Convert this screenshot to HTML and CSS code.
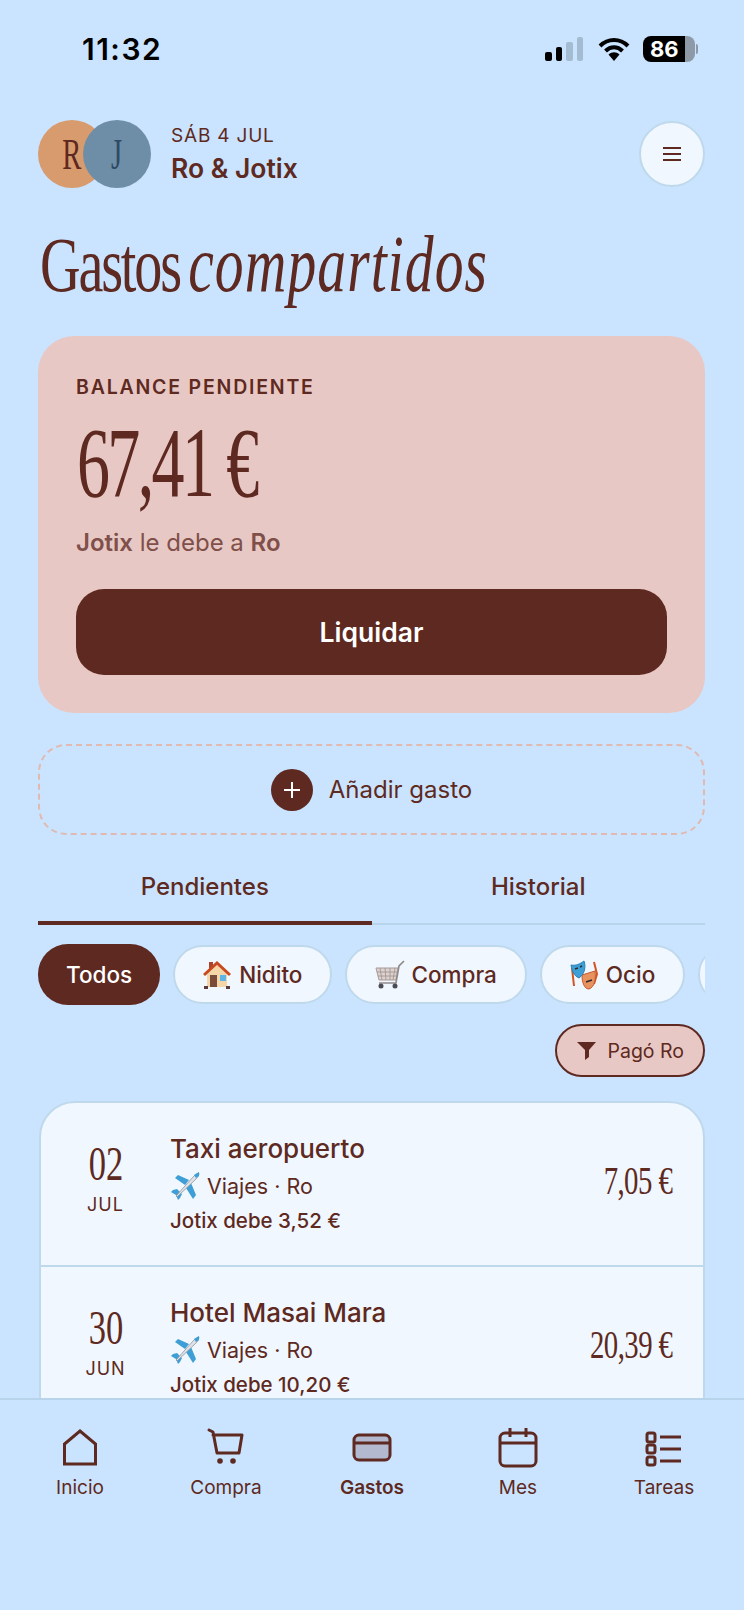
FILE: index.html
```html
<!DOCTYPE html>
<html lang="es">
<head>
	<meta charset="UTF-8">
	<title>Gastos compartidos</title>
	<link rel="stylesheet" href="styles.css">
</head>
<body>
	<svg class="defs" width="0" height="0">
		<symbol id="plane" viewBox="0 0 30 30">
			<path d="M5 7 8 4 19 9 15 14Z" fill="#3d9fd6"/>
			<path d="M7 18 3 19 1 21 6 24 8 29 10 27 12 23Z" fill="#3d9fd6"/>
			<path d="M16 17 21 12 26 24 23 28Z" fill="#3d9fd6"/>
			<path d="M6 25 24 5C26 3 28 2 29 2 29 4 28 6 26 8L7 26Z" fill="#dfe3e8" stroke="#8d949c" stroke-width=".8"/>
			<path d="M24 4 29 1 29 5 26 7Z" fill="#3d9fd6"/>
		</symbol>
	</svg>
	<div class="app">
		<div class="status">
			<span class="time">11:32</span>
			<div class="status-icons">
				<div class="signal">
					<i class="bar b1"></i>
					<i class="bar b2"></i>
					<i class="bar b3 off"></i>
					<i class="bar b4 off"></i>
				</div>
				<svg class="wifi" width="32" height="24" viewBox="0 0 32 24">
					<path d="M2 9C10 1 22 1 30 9" fill="none" stroke="#000" stroke-width="4"/>
					<path d="M7.500 14C12.500 9 19.500 9 24.500 14" fill="none" stroke="#000" stroke-width="4"/>
					<path d="M10.500 17.500C14 14.500 18 14.500 21.500 17.500L16 24Z" fill="#000"/>
				</svg>
				<div class="battery"><span>86</span><i class="nub"></i></div>
			</div>
		</div>

		<div class="main">
			<div class="head">
				<div class="avatars">
					<div class="avatar ro"><span class="narrow mid">R</span></div>
					<div class="avatar jo"><span class="narrow mid">J</span></div>
				</div>
				<div class="who">
					<div class="date">SÁB 4 JUL</div>
					<div class="names">Ro &amp; Jotix</div>
				</div>
				<div class="menu">
					<svg width="18" height="14" viewBox="0 0 18 14"><path d="M0 1H18M0 7H18M0 13H18" stroke="#5e2920" stroke-width="2"/></svg>
				</div>
			</div>

			<h1 class="title"><span class="narrow">Gastos <em>compartidos</em></span></h1>

			<div class="balance">
				<div class="label">BALANCE PENDIENTE</div>
				<div class="total"><span class="narrow">67,41 €</span></div>
				<div class="sub"><b>Jotix</b> le debe a <b>Ro</b></div>
				<div class="settle">Liquidar</div>
			</div>

			<div class="add">
				<span class="plus">
					<svg width="18" height="18" viewBox="0 0 18 18"><path d="M9 1V17M1 9H17" stroke="#fff" stroke-width="2"/></svg>
				</span>
				<span>Añadir gasto</span>
			</div>

			<div class="tabs">
				<div class="tab on">Pendientes</div>
				<div class="tab">Historial</div>
			</div>

			<div class="chips">
				<div class="chip dark">Todos</div>
				<div class="chip">
					<svg width="28" height="30" viewBox="0 0 28 30">
						<path d="M6 2H10V9H6Z" fill="#a8452c"/>
						<path d="M4 13 14 4 24 13V27H4Z" fill="#f5d6a8"/>
						<path d="M1 15 14 3 27 15" fill="none" stroke="#c8491f" stroke-width="3"/>
						<path d="M7 15H14V27H7Z" fill="#7a4a3a"/>
						<path d="M17 15H23V21H17Z" fill="#5fb4e6"/>
						<path d="M1 26H5V29H1ZM23 26H27V29H23Z" fill="#5a3a3a"/>
					</svg>
					Nidito
				</div>
				<div class="chip tight">
					<svg width="30" height="30" viewBox="0 0 30 30">
						<path d="M1 8H23L21 20H4Z" fill="#dcd2d0" stroke="#a89a98" stroke-width="1"/>
						<path d="M5 8 7 20M10 8 11 20M15 8 15 20M20 8 18 20M2 12H22M3 16H21" stroke="#a08f8d" stroke-width=".8"/>
						<path d="M29 1 24 6 21 23H4" fill="none" stroke="#8f8a8a" stroke-width="1.600"/>
						<circle cx="6" cy="26" r="2.500" fill="#4c4a55"/>
						<circle cx="20" cy="26" r="2.500" fill="#4c4a55"/>
					</svg>
					Compra
				</div>
				<div class="chip">
					<svg width="28" height="30" viewBox="0 0 28 30">
						<path d="M2 8 4 26M24 2 27 14 24 24" fill="none" stroke="#d4521f" stroke-width="2"/>
						<path d="M12 15 25 11C26 18 25 27 19 29 14 29 12 22 12 15Z" fill="#e8935f" stroke="#c7582a"/>
						<path d="M1 5C6 6 10 4 14 1 16 6 15 14 9 18 4 16 2 11 1 5Z" fill="#3d9fd6" stroke="#2b7fb5"/>
						<path d="M5 9 8 8M10 7 12 6M16 22 22 20" stroke="#33292b" stroke-width="1.500"/>
					</svg>
					Ocio
				</div>
				<div class="chip blank"></div>
			</div>

			<div class="filter-row">
				<div class="filter">
					<svg width="19" height="18" viewBox="0 0 19 18"><path d="M0 0H19L12 8V15L8 18V8Z" fill="#5e2920"/></svg>
					Pagó Ro
				</div>
			</div>

			<div class="list">
				<div class="row">
					<div class="day">
						<div class="num"><span class="narrow mid">02</span></div>
						<div class="mon">JUL</div>
					</div>
					<div class="info">
						<div class="name">Taxi aeropuerto</div>
						<div class="meta"><svg width="30" height="30"><use href="#plane"/></svg>Viajes · Ro</div>
						<div class="owes">Jotix debe 3,52 €</div>
					</div>
					<div class="amount"><span class="narrow end">7,05 €</span></div>
				</div>
				<div class="row">
					<div class="day">
						<div class="num"><span class="narrow mid">30</span></div>
						<div class="mon">JUN</div>
					</div>
					<div class="info">
						<div class="name">Hotel Masai Mara</div>
						<div class="meta"><svg width="30" height="30"><use href="#plane"/></svg>Viajes · Ro</div>
						<div class="owes">Jotix debe 10,20 €</div>
					</div>
					<div class="amount"><span class="narrow end">20,39 €</span></div>
				</div>
			</div>
		</div>

		<div class="nav">
			<div class="nav-item">
				<svg width="44" height="44" viewBox="0 0 44 44"><path d="M6.500 38V18L22 5 37.500 18V38Z" fill="none" stroke="#5e2920" stroke-width="3"/></svg>
				Inicio
			</div>
			<div class="nav-item">
				<svg width="44" height="44" viewBox="0 0 44 44"><path d="M5 4 9 6 13 27H35L38 9H9" fill="none" stroke="#5e2920" stroke-width="3" stroke-linejoin="round" stroke-linecap="round"/><circle cx="16" cy="35" r="2.800" fill="#5e2920"/><circle cx="29" cy="35" r="2.800" fill="#5e2920"/></svg>
				Compra
			</div>
			<div class="nav-item active">
				<svg width="44" height="44" viewBox="0 0 44 44"><rect x="4" y="9" width="36" height="25" rx="5" fill="#b3bad0" stroke="#5e2920" stroke-width="3"/><path d="M4 17H40" stroke="#5e2920" stroke-width="3"/></svg>
				Gastos
			</div>
			<div class="nav-item">
				<svg width="44" height="44" viewBox="0 0 44 44"><rect x="4" y="7" width="36" height="33" rx="5" fill="none" stroke="#5e2920" stroke-width="3"/><path d="M4 17H40M14 2V11M30 2V11" stroke="#5e2920" stroke-width="3"/></svg>
				Mes
			</div>
			<div class="nav-item">
				<svg width="44" height="44" viewBox="0 0 44 44"><rect x="5" y="7" width="8" height="9" rx="2" fill="none" stroke="#5e2920" stroke-width="3"/><rect x="5" y="19" width="8" height="8" rx="2" fill="none" stroke="#5e2920" stroke-width="3"/><rect x="5" y="31" width="8" height="8" rx="2" fill="none" stroke="#5e2920" stroke-width="3"/><path d="M18 11H39M18 23H39M18 35H39" stroke="#5e2920" stroke-width="3"/></svg>
				Tareas
			</div>
		</div>
	</div>
</body>
</html>
```

FILE: styles.css
```css
html *{
	padding:0;
	margin:0;
	box-sizing:border-box;
}
body{
	background-color:#cae4ff;
	color:#5e2920;
	font-family:"Inter","Liberation Sans",sans-serif;
}
.defs{
	position:absolute;
}
.app{
	width:744px;
	height:1610px;
	display:flex;
	flex-direction:column;
	overflow:hidden;
}
.narrow{
	display:inline-block;
	font-family:"Liberation Serif",serif;
	font-weight:400;
	white-space:nowrap;
	transform:scaleX(.72);
	transform-origin:left center;
}
.narrow.mid{
	transform-origin:center;
}
.narrow.end{
	transform-origin:right center;
}

/* status bar */
.status{
	height:98px;
	flex:none;
	display:flex;
	align-items:center;
	justify-content:space-between;
	padding:0 49px 0 82px;
	color:#000;
}
.time{
	font-size:30px;
	font-weight:600;
	line-height:36px;
	letter-spacing:1.500px;
}
.status-icons{
	display:flex;
	align-items:center;
}
.signal{
	display:flex;
	align-items:flex-end;
	gap:4px;
	height:24px;
	margin-right:15px;
}
.bar{
	display:block;
	width:6.500px;
	background-color:#000;
	border-radius:2px;
}
.bar.off{
	background-color:#a3bcd2;
}
.b1{height:9px;}
.b2{height:14px;}
.b3{height:19px;}
.b4{height:24px;}
.wifi{
	margin-right:13px;
}
.battery{
	position:relative;
	width:52px;
	height:26px;
	border-radius:8px;
	background:linear-gradient(90deg,#000 80%,#8d99a6 80%);
	color:#fff;
	font-size:22px;
	font-weight:700;
	line-height:26px;
	padding-left:7px;
}
.nub{
	position:absolute;
	left:53px;
	top:8px;
	width:2px;
	height:10px;
	border-radius:0 2px 2px 0;
	background-color:#8d99a6;
}

.main{
	flex:1;
	min-height:0;
	overflow:hidden;
	padding:22px 39px 0 38px;
}

/* header */
.head{
	display:flex;
	align-items:center;
	height:68px;
}
.avatars{
	display:flex;
	margin-right:20px;
}
.avatar{
	width:68px;
	height:68px;
	border-radius:50%;
	display:flex;
	align-items:center;
	justify-content:center;
	font-size:44px;
}
.avatar .narrow{
	transform:scaleX(.65);
}
.avatar.ro{
	background-color:#d89b6e;
	color:#5e2920;
}
.avatar.jo{
	background-color:#6e8ea8;
	margin-left:-23px;
	color:#2f4a62;
}
.who{
	flex:1;
}
.date{
	font-size:19px;
	line-height:26px;
	letter-spacing:.8px;
}
.names{
	font-size:26.500px;
	font-weight:600;
	line-height:34px;
	margin-top:2px;
}
.menu{
	width:66px;
	height:66px;
	border-radius:50%;
	background-color:#f0f7ff;
	border:2px solid #bfd9ec;
	display:flex;
	align-items:center;
	justify-content:center;
}

.title{
	height:94px;
	margin-top:28px;
	font-size:78px;
	line-height:94px;
	font-weight:400;
	letter-spacing:-3px;
	word-spacing:-5px;
	margin-left:2px;
}
.title em{
	font-size:80px;
	letter-spacing:1.500px;
}

/* balance card */
.balance{
	height:377px;
	margin-top:26px;
	padding:38px 38px 0;
	border-radius:36px;
	background-color:#e8c8c4;
}
.label{
	font-size:19.500px;
	font-weight:600;
	letter-spacing:1.800px;
	line-height:26px;
}
.total{
	height:92px;
	margin-top:14px;
	font-size:100px;
	line-height:92px;
}
.total .narrow{
	transform:scaleX(.66);
	letter-spacing:-4px;
	margin-left:1px;
}
.sub{
	margin-top:22px;
	font-size:24px;
	line-height:30px;
	color:#7f4f4a;
}
.sub b{
	font-weight:600;
}
.settle{
	height:86px;
	margin-top:31px;
	border-radius:28px;
	background-color:#5e2920;
	color:#fff;
	font-size:26.500px;
	font-weight:600;
	display:flex;
	align-items:center;
	justify-content:center;
}

.add{
	height:91px;
	margin-top:31px;
	border:2px dashed #e0b9b1;
	border-radius:28px;
	display:flex;
	align-items:center;
	justify-content:center;
	gap:16px;
	font-size:24px;
}
.plus{
	width:42px;
	height:42px;
	border-radius:50%;
	background-color:#5e2920;
	display:flex;
	align-items:center;
	justify-content:center;
}

/* tabs */
.tabs{
	display:flex;
	height:90px;
	border-bottom:2px solid #b7d4ea;
}
.tab{
	flex:1;
	font-size:24px;
	font-weight:500;
	text-align:center;
	padding-top:35px;
	line-height:34px;
}
.tab.on{
	height:90px;
	border-bottom:4px solid #5e2920;
}

/* chips */
.chips{
	display:flex;
	align-items:center;
	gap:13px;
	margin-top:19px;
	overflow:hidden;
}
.chip{
	flex:none;
	display:flex;
	align-items:center;
	gap:8px;
	height:59px;
	padding:0 28px;
	border-radius:30px;
	border:2px solid #bfd9ec;
	background-color:#f0f7ff;
	font-size:22.500px;
	font-weight:500;
}
.chip.tight{
	gap:6px;
}
.chip.dark{
	height:61px;
	background-color:#5e2920;
	border:0;
	color:#fff;
}
.chip.blank{
	width:100px;
}
.filter-row{
	display:flex;
	justify-content:flex-end;
	margin-top:19px;
}
.filter{
	display:flex;
	align-items:center;
	gap:12px;
	height:53px;
	padding:0 19px 0 20px;
	border:2px solid #5e2920;
	border-radius:27px;
	background-color:#e8c8c4;
	font-size:19.500px;
}

/* expense list */
.list{
	margin-top:24px;
	margin-left:1px;
	border:2px solid #bfd9ec;
	border-radius:36px;
	background-color:#f0f7ff;
}
.row{
	display:flex;
	align-items:flex-start;
	height:164px;
	padding-top:28px;
	border-bottom:2px solid #bfd9ec;
}
.day{
	width:129px;
	flex:none;
	text-align:center;
}
.num{
	font-size:48px;
	line-height:44px;
	margin-top:10px;
}
.mon{
	font-size:18px;
	letter-spacing:1px;
	line-height:24px;
	margin-top:7px;
}
.info{
	flex:1;
}
.name{
	font-size:26px;
	font-weight:500;
	line-height:36px;
}
.meta{
	display:flex;
	align-items:center;
	gap:7px;
	font-size:21.500px;
	height:34px;
	margin-top:2px;
}
.owes{
	font-size:20.500px;
	font-weight:500;
	line-height:28px;
	margin-top:4px;
}
.amount{
	font-size:40px;
	line-height:48px;
	letter-spacing:-.8px;
	margin:25px 31px 0 0;
}

/* bottom nav */
.nav{
	height:212px;
	flex:none;
	display:flex;
	padding:26px 7px 0;
	border-top:2px solid #b7d4ea;
	background-color:#cae4ff;
}
.nav-item{
	flex:1;
	display:flex;
	flex-direction:column;
	align-items:center;
	gap:5px;
	font-size:19px;
	line-height:26px;
}
.nav-item.active{
	font-weight:600;
}
```
